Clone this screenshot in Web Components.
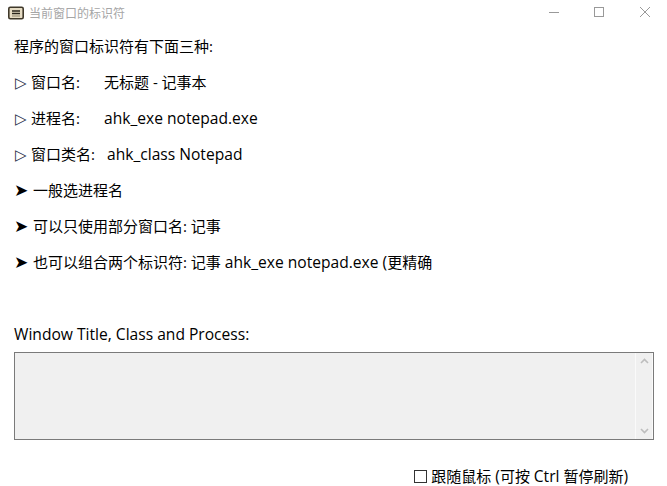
<!DOCTYPE html>
<html lang="zh-CN">
<head>
<meta charset="utf-8">
<title>当前窗口的标识符</title>
<style>
  html, body { margin: 0; padding: 0; background: #fff; }
  body { font: 15px "Open Sans", "Noto Sans CJK SC", sans-serif; color: #000; }
  /* 西文部分比中文略大 */
  .en { font-size: 15.6px; }
</style>
</head>
<body>
<app-window>
  <title-bar slot="bar">当前窗口的标识符</title-bar>
  <info-line>程序的窗口标识符有下面三种:</info-line>
  <info-line><span slot="mark">▷</span><span slot="label" style="width:73px">窗口名:</span>无标题 - 记事本</info-line>
  <info-line><span slot="mark">▷</span><span slot="label" style="width:73px">进程名:</span><span class="en">ahk_exe notepad.exe</span></info-line>
  <info-line><span slot="mark">▷</span><span slot="label" style="width:76px">窗口类名:</span><span class="en">ahk_class Notepad</span></info-line>
  <info-line bold-mark><span slot="mark">➤</span>一般选进程名</info-line>
  <info-line bold-mark><span slot="mark">➤</span>可以只使用部分窗口名: 记事</info-line>
  <info-line bold-mark><span slot="mark">➤</span>也可以组合两个标识符: 记事 <span class="en">ahk_exe notepad.exe (</span>更精确</info-line>
  <readonly-box slot="box"><span class="en">Window Title, Class and Process:</span></readonly-box>
  <check-option slot="foot">跟随鼠标 <span class="en">(</span>可按 <span class="en">Ctrl</span> 暂停刷新<span class="en">)</span></check-option>
</app-window>

<script>
// 窗口外框
class AppWindow extends HTMLElement {
  constructor() {
    super();
    this.attachShadow({ mode: "open" });
    this.shadowRoot.innerHTML = `
      <style>
        :host { display: flex; flex-direction: column; width: 667px; height: 486px; overflow: hidden; }
        .lines { display: flex; flex-direction: column; padding: 3px 14px 0; }
        .box { padding: 0 13px 0 14px; margin-top: 44px; }
        .foot { display: flex; justify-content: flex-end; padding: 0 39px 0 0; margin-top: 26px; }
      </style>
      <slot name="bar"></slot>
      <div class="lines"><slot></slot></div>
      <div class="box"><slot name="box"></slot></div>
      <div class="foot"><slot name="foot"></slot></div>
    `;
  }
}

// 标题栏
class TitleBar extends HTMLElement {
  constructor() {
    super();
    this.attachShadow({ mode: "open" });
    this.shadowRoot.innerHTML = `
      <style>
        :host { display: flex; align-items: center; height: 25px; padding-left: 8px; color: #a6a6a6; font-size: 12px; }
        .icon { width: 16px; height: 14px; margin-right: 5px; flex: none; }
        .title { flex: 1; }
        .btns { display: flex; align-self: flex-start; height: 25px; }
        .btns svg { width: 46px; height: 25px; display: block; }
      </style>
      <svg class="icon" viewBox="0 0 16 14">
        <rect x="0.8" y="1.3" width="14.4" height="11.4" rx="1.5" fill="#e6dcc4" stroke="#3f382a" stroke-width="1.6"/>
        <path d="M4 5h8M4 7.5h8" stroke="#2a251b" stroke-width="1.3"/>
        <path d="M4 10h8" stroke="#8a8069" stroke-width="1"/>
      </svg>
      <span class="title"><slot></slot></span>
      <div class="btns">
        <svg viewBox="0 0 46 25"><path d="M20 12.5h10" stroke="#999" stroke-width="1"/></svg>
        <svg viewBox="0 0 46 25"><rect x="19.5" y="7.5" width="9" height="9" fill="none" stroke="#999" stroke-width="1"/></svg>
        <svg viewBox="0 0 46 25"><path d="M19 7l10 10M29 7l-10 10" stroke="#999" stroke-width="1"/></svg>
      </div>
    `;
  }
}

// 一行说明文字
class InfoLine extends HTMLElement {
  constructor() {
    super();
    this.attachShadow({ mode: "open" });
    this.shadowRoot.innerHTML = `<style>
        :host { display: block; height: 36px; line-height: 36px; white-space: nowrap; color: #000; }
        ::slotted([slot="mark"]) { display: inline-block; width: 16px; margin-left: 1px; font-family: "DejaVu Sans", sans-serif; font-size: 15px; color: #1c2a44; }
        :host([bold-mark]) ::slotted([slot="mark"]) { width: 19px; margin-left: 0; color: #000; font-size: 17px; }
        ::slotted([slot="label"]) { display: inline-block; }
      </style><slot name="mark"></slot><slot name="label"></slot><slot></slot>`;
  }
}

// 只读多行文本框,带标题
class ReadonlyBox extends HTMLElement {
  constructor() {
    super();
    this.attachShadow({ mode: "open" });
    this.shadowRoot.innerHTML = `
      <style>
        :host { display: block; }
        label { display: block; line-height: 20px; margin-bottom: 8px; }
        .field { display: flex; justify-content: flex-end; height: 86px; border: 1px solid #7a7a7a; background: #f0f0f0; }
        .bar { display: flex; flex-direction: column; justify-content: space-between; align-items: center; width: 18px; box-sizing: border-box; padding: 5px 0; border-left: 1px solid #fafafa; border-right: 1px solid #fafafa; }
        .bar svg { width: 9px; height: 6px; display: block; }
      </style>
      <label><slot></slot></label>
      <div class="field">
        <div class="bar">
          <svg viewBox="0 0 9 6"><path d="M1 5l3.5-3.5L8 5" fill="none" stroke="#bdbdbd" stroke-width="1.6"/></svg>
          <svg viewBox="0 0 9 6"><path d="M1 1l3.5 3.5L8 1" fill="none" stroke="#bdbdbd" stroke-width="1.6"/></svg>
        </div>
      </div>
    `;
  }
}

// 复选框
class CheckOption extends HTMLElement {
  constructor() {
    super();
    this.attachShadow({ mode: "open" });
    this.shadowRoot.innerHTML = `<style>
        :host { display: inline-flex; align-items: center; height: 20px; }
        .mark { width: 11px; height: 11px; border: 1px solid #333; margin-right: 4px; flex: none; }
        .text { white-space: nowrap; }
      </style><span class="mark"></span><span class="text"><slot></slot></span>`;
  }
}

customElements.define("app-window", AppWindow);
customElements.define("title-bar", TitleBar);
customElements.define("info-line", InfoLine);
customElements.define("readonly-box", ReadonlyBox);
customElements.define("check-option", CheckOption);
</script>
</body>
</html>
